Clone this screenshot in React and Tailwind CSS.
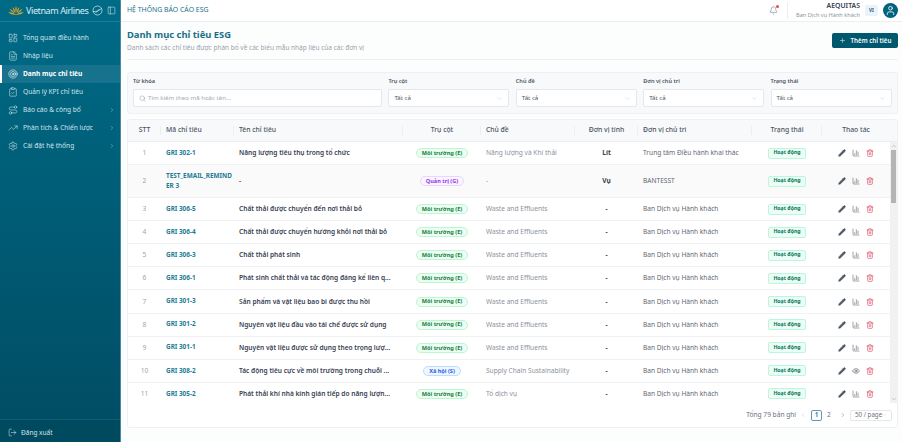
import { Bell, BarChart3, ChevronDown, ChevronLeft, ChevronRight, ChevronUp, ClipboardCheck, Eye, FileText, LayoutDashboard, LogOut, PanelLeft, Pencil, Plus, Route, Search, Settings, Target, Trash2, TrendingUp, User } from "lucide-react";

const font = "font-['Noto_Sans',sans-serif]";
const cols = "grid grid-cols-[33px_73px_169px_78px_94px_63px_114px_70px_68px]";

const menu = [
  { label: "Tổng quan điều hành", icon: LayoutDashboard },
  { label: "Nhập liệu", icon: FileText },
  { label: "Danh mục chỉ tiêu", icon: Target, active: true },
  { label: "Quản lý KPI chỉ tiêu", icon: ClipboardCheck },
  { label: "Báo cáo & công bố", icon: Route, more: true },
  { label: "Phân tích & Chiến lược", icon: TrendingUp, more: true },
  { label: "Cài đặt hệ thống", icon: Settings, more: true },
];

const env = "Môi trường (E)";
const waste = "Waste and Effluents";
const ban = "Ban Dịch vụ Hành khách";

const rows = [
  { code: "GRI 302-1", name: "Năng lượng tiêu thụ trong tổ chức", pillar: env, topic: "Năng lượng và Khí thải", unit: "Lít", owner: "Trung tâm Điều hành khai thác" },
  { code: "TEST_EMAIL_REMINDER 3", name: "-", pillar: "Quản trị (G)", topic: "-", unit: "Vụ", owner: "BANTESST", tall: true },
  { code: "GRI 306-5", name: "Chất thải được chuyển đến nơi thải bỏ", pillar: env, topic: waste, unit: "-", owner: ban },
  { code: "GRI 306-4", name: "Chất thải được chuyển hướng khỏi nơi thải bỏ", pillar: env, topic: waste, unit: "-", owner: ban },
  { code: "GRI 306-3", name: "Chất thải phát sinh", pillar: env, topic: waste, unit: "-", owner: ban },
  { code: "GRI 306-1", name: "Phát sinh chất thải và tác động đáng kể liên q...", pillar: env, topic: waste, unit: "-", owner: ban },
  { code: "GRI 301-3", name: "Sản phẩm và vật liệu bao bì được thu hồi", pillar: env, topic: waste, unit: "-", owner: ban },
  { code: "GRI 301-2", name: "Nguyên vật liệu đầu vào tái chế được sử dụng", pillar: env, topic: waste, unit: "-", owner: ban },
  { code: "GRI 301-1", name: "Nguyên vật liệu được sử dụng theo trọng lượ...", pillar: env, topic: waste, unit: "-", owner: ban },
  { code: "GRI 308-2", name: "Tác động tiêu cực về môi trường trong chuỗi ...", pillar: "Xã hội (S)", topic: "Supply Chain Sustainability", unit: "-", owner: ban, eye: true },
  { code: "GRI 305-2", name: "Phát thải khí nhà kính gián tiếp do năng lượn...", pillar: env, topic: "Tổ dịch vụ", unit: "-", owner: ban },
];

const pillarStyles = {
  [env]: "bg-[#ecfdf3] border-[#bbf7d0] text-[#15803d]",
  "Quản trị (G)": "bg-[#faf5ff] border-[#e9d5ff] text-[#9333ea]",
  "Xã hội (S)": "bg-[#eff6ff] border-[#bfdbfe] text-[#2563eb]",
};

function Logo() {
  return (
    <div className="flex items-center">
      <svg width="16" height="10" viewBox="0 0 34 22" fill="#e0a526">
        <path d="M17 0c2 4 2 9 0 14-2-5-2-10 0-14z" />
        <path d="M10 2c3 3 5 8 6 13-4-3-6-8-6-13z" />
        <path d="M24 2c-3 3-5 8-6 13 4-3 6-8 6-13z" />
        <path d="M3 6c4 2 9 6 12 10-5-1-10-5-12-10z" />
        <path d="M31 6c-4 2-9 6-12 10 5-1 10-5 12-10z" />
        <path d="M0 13c5 0 11 2 15 5-5 1-11 0-15-5z" />
        <path d="M34 13c-5 0-11 2-15 5 5 1 11 0 15-5z" />
        <path d="M8 20c3-1 6-2 9-2s6 1 9 2z" />
      </svg>
      <span className="ml-[2px] w-[64px] text-[9px] tracking-[-0.4px] whitespace-nowrap text-[#dcecf1]">Vietnam Airlines</span>
      <svg className="ml-[2px]" width="11" height="11" viewBox="0 0 22 22" fill="none" stroke="#cfe3ea" strokeWidth="1.5">
        <circle cx="11" cy="11" r="9" />
        <path d="M2 13c6 1 12-1 18-7M7 16l8-8" />
      </svg>
      <PanelLeft className="ml-[4px] text-[#cfe3ea]" size={9} strokeWidth={1.5} />
    </div>
  );
}

function Sidebar() {
  return (
    <aside className="w-[121px] shrink-0 flex flex-col bg-gradient-to-b from-[#006b87] to-[#004c63] border-r border-[#4a8aa0]">
      <div className="h-[22px] pl-[8px] flex items-center border-b border-[#1f7a94]">
        <Logo />
      </div>
      <nav className="flex-1 pt-[7px] flex flex-col">
        {menu.map((m) => {
          const Icon = m.icon;
          return (
            <div
              key={m.label}
              className={`h-[18px] pr-[5px] flex items-center text-[6.6px] ${m.active ? "bg-[#17728d] border-l-2 border-white pl-[6px] font-bold text-white" : "pl-[8px] text-[#cfe3ea]"}`}
            >
              <Icon size={10} strokeWidth={1.4} className="mr-[5px] shrink-0" />
              <span className="flex-1 whitespace-nowrap">{m.label}</span>
              {m.more && <ChevronRight size={6} strokeWidth={1.5} />}
            </div>
          );
        })}
      </nav>
      <div className="h-[23px] pl-[8px] pt-[3px] flex items-center gap-[4px] border-t border-[#0c5d75] bg-[#004a60] text-[6.5px] text-[#cfe3ea]">
        <LogOut size={9} strokeWidth={1.5} />
        <span>Đăng xuất</span>
      </div>
    </aside>
  );
}

function Topbar() {
  return (
    <header className="h-[22px] shrink-0 pl-[6px] pr-[4px] flex items-center bg-white border-b border-[#eceff1]">
      <span className="flex-1 text-[6.9px] text-[#1c7089]">HỆ THỐNG BÁO CÁO ESG</span>
      <div className="relative mr-[9px]">
        <Bell size={9} strokeWidth={1.4} className="text-[#6b7280]" />
        <span className="absolute -top-[1px] -right-[1px] w-[3px] h-[3px] rounded-full bg-[#ef4444]" />
      </div>
      <div className="h-[17px] border-l border-[#eceff1] mr-[8px]" />
      <div className="text-right leading-none mr-[5px]">
        <div className="text-[6.9px] font-semibold text-[#374151]">AEQUITAS</div>
        <div className="mt-[3px] text-[5.6px] text-[#8b95a1]">Ban Dịch vụ Hành khách</div>
      </div>
      <span className="w-[13px] h-[11px] mr-[5px] rounded-[2px] bg-[#e8f3fa] flex items-center justify-center text-[4.6px] font-bold text-[#33566a]">VI</span>
      <span className="w-[15px] h-[15px] rounded-full bg-[#00637d] flex items-center justify-center">
        <User size={11} strokeWidth={1.8} className="text-white" />
      </span>
    </header>
  );
}

function Select({ label }) {
  return (
    <div>
      <div className="h-[9px] mb-[3px] text-[5.6px] leading-[9px] font-semibold text-[#4b5563]">{label}</div>
      <div className="h-[18px] px-[5px] flex items-center justify-between bg-white border border-[#e5e7eb] rounded-[2px] text-[6.1px] text-[#4b5563]">
        <span>Tất cả</span>
        <ChevronDown size={7} strokeWidth={1} className="text-[#9ca3af]" />
      </div>
    </div>
  );
}

function Filters() {
  return (
    <section className="mt-[12px] h-[42px] px-[5px] pt-[4px] grid grid-cols-[249px_121px_121px_121px_121px] gap-x-[6.4px] bg-[#f8f9fa] border border-[#eef0f2] rounded-[3px]">
      <div>
        <div className="h-[9px] mb-[3px] text-[5.6px] leading-[9px] font-semibold text-[#4b5563]">Từ khóa</div>
        <div className="h-[18px] px-[5px] flex items-center gap-[2px] bg-white border border-[#e5e7eb] rounded-[2px] text-[6.1px] text-[#a3abb5]">
          <Search size={7} strokeWidth={1.2} className="text-[#6b7280]" />
          <span>Tìm kiếm theo mã hoặc tên...</span>
        </div>
      </div>
      <Select label="Trụ cột" />
      <Select label="Chủ đề" />
      <Select label="Đơn vị chủ trì" />
      <Select label="Trạng thái" />
    </section>
  );
}

function HeadCell({ children, center, divider = true }) {
  return (
    <div className={`relative flex items-center px-[5px] ${center ? "justify-center" : ""}`}>
      {children}
      {divider && <span className="absolute right-0 top-[6px] bottom-[6px] border-r border-[#eceff1]" />}
    </div>
  );
}

function Row({ row, index }) {
  return (
    <div className={`${cols} ${row.tall ? "h-[33px] bg-[#fafafa]" : "h-[23.1px] bg-white"} border-b border-[#f0f1f2] text-[6.6px] items-center`}>
      <div className="text-center text-[#9ca3af]">{index + 1}</div>
      <div className="pl-[5px] pr-[2px] text-[6.4px] font-bold leading-[10.5px] text-[#1d7c94] break-all">{row.code}</div>
      <div className="px-[5px] font-semibold text-[#374151] whitespace-nowrap overflow-hidden">{row.name}</div>
      <div className="flex justify-center">
        <span className={`px-[5px] h-[10px] flex items-center rounded-full border text-[5.6px] font-bold ${pillarStyles[row.pillar]}`}>{row.pillar}</span>
      </div>
      <div className="px-[5px] text-[#8b929c] whitespace-nowrap">{row.topic}</div>
      <div className="text-center font-bold text-[#374151]">{row.unit}</div>
      <div className="px-[5px] text-[#5f6773] whitespace-nowrap">{row.owner}</div>
      <div className="flex justify-center">
        <span className="px-[4px] h-[11px] flex items-center rounded-[2px] border border-[#bbf7e0] bg-[#ecfdf5] text-[5.2px] font-bold text-[#047857]">Hoạt động</span>
      </div>
      <div className="flex justify-center items-center gap-[6px]">
        <Pencil size={8} strokeWidth={1.8} fill="currentColor" className="text-[#4b5563]" />
        {row.eye ? <Eye size={8} strokeWidth={1.8} className="text-[#4b5563]" /> : <BarChart3 size={8} strokeWidth={1.6} className="text-[#4b5563]" />}
        <Trash2 size={8} strokeWidth={1.8} className="text-[#dc3b55]" />
      </div>
    </div>
  );
}

function Scrollbar() {
  return (
    <div className="w-[7px] shrink-0 flex flex-col items-center bg-[#f1f1f1]">
      <ChevronUp size={6} strokeWidth={2} className="h-[8px] text-[#9a9a9a]" />
      <div className="w-[5px] h-[53px] bg-[#b4b4b4]" />
      <div className="flex-1" />
      <ChevronDown size={6} strokeWidth={2} className="h-[8px] text-[#9a9a9a]" />
    </div>
  );
}

function Table() {
  return (
    <section className="mt-[5px] h-[309px] flex flex-col bg-white border border-[#eef0f2] rounded-[3px]">
      <div className={`${cols} h-[22px] shrink-0 bg-[#f8f9fa] border-b border-[#eceff1] text-[6.8px] font-medium text-[#4b5563]`}>
        <HeadCell center>STT</HeadCell>
        <HeadCell>Mã chỉ tiêu</HeadCell>
        <HeadCell>Tên chỉ tiêu</HeadCell>
        <HeadCell center>Trụ cột</HeadCell>
        <HeadCell>Chủ đề</HeadCell>
        <HeadCell center>Đơn vị tính</HeadCell>
        <HeadCell>Đơn vị chủ trì</HeadCell>
        <HeadCell center>Trạng thái</HeadCell>
        <HeadCell center divider={false}>Thao tác</HeadCell>
      </div>
      <div className="h-[261px] shrink-0 flex overflow-hidden">
        <div className="flex-1 min-w-0">
          {rows.map((r, i) => <Row key={r.code} row={r} index={i} />)}
        </div>
        <Scrollbar />
      </div>
      <div className="flex-1 pr-[5px] flex items-center justify-end text-[6.6px] text-[#6b7280]">
        <span className="mr-[4px] whitespace-nowrap">Tổng 79 bản ghi</span>
        <ChevronLeft size={6} className="mr-[5px] text-[#c0c4c9]" />
        <span className="w-[11px] h-[11px] mr-[1px] flex items-center justify-center rounded-[2px] border border-[#5a9db3] text-[#1d6f87] font-semibold text-[6.4px]">1</span>
        <span className="w-[12px] text-center mr-[5px]">2</span>
        <ChevronRight size={6} className="mr-[4px]" />
        <span className="w-[42px] h-[11px] px-[4px] flex items-center justify-between bg-white border border-[#e5e7eb] rounded-[2px] text-[6.2px] whitespace-nowrap">
          50 / page
          <ChevronDown size={6} strokeWidth={1} className="text-[#9ca3af]" />
        </span>
      </div>
    </section>
  );
}

export default function App() {
  return (
    <div className={`${font} w-[902px] h-[442px] flex overflow-hidden bg-[#fcfdfd]`}>
      <Sidebar />
      <div className="flex-1 min-w-0 flex flex-col">
        <Topbar />
        <main className="flex-1 pl-[6px] pr-[4px] pt-[6px]">
          <div className="h-[32px] pb-[4px] flex justify-between border-b border-[#eef0f2]">
            <div>
              <h1 className="text-[9.4px] leading-[14px] font-bold text-[#1a6f88]">Danh mục chỉ tiêu ESG</h1>
              <p className="mt-[1px] text-[6.5px] leading-[10px] text-[#9aa3ad]">Danh sách các chỉ tiêu được phân bổ về các biểu mẫu nhập liệu của các đơn vị</p>
            </div>
            <button className="mt-[5px] w-[66px] h-[15px] flex items-center justify-center gap-[5px] rounded-[2px] bg-[#00586f] text-[6.2px] font-semibold text-white">
              <Plus size={7} strokeWidth={1.6} />
              Thêm chỉ tiêu
            </button>
          </div>
          <Filters />
          <Table />
        </main>
      </div>
    </div>
  );
}
